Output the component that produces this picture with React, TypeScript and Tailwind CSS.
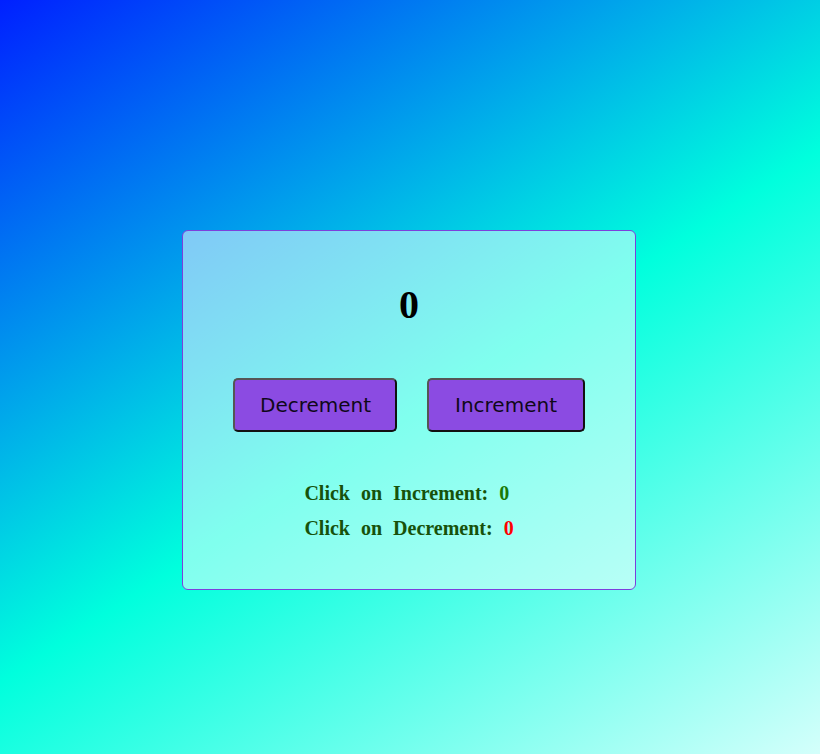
import React, { useState } from "react";

const App = () => {
  const [count, setCount] = useState(0);
  const [inc, setInc] = useState(0);
  const [dec, setDec] = useState(0);

  return (
    <div className="min-h-[754px] w-full bg-linear-[147deg] from-[#0020ff] via-[#00ffdd] via-53% to-[#d4fffb] pt-[230px] pr-[2px] flex justify-center">
      <div className="w-[454px] h-[360px] border border-[#7d3fdc] rounded-[6px] bg-white/50 flex flex-col items-center pt-[52px]">
        <h1 className="font-['Liberation_Serif',serif] font-bold text-[40px] leading-[44px] text-black">
          {count}
        </h1>
        <div className="flex gap-[30px] mt-[51px]">
          <button
            onClick={() => {
              setCount(count - 1);
              setDec(dec + 1);
            }}
            className="font-['DejaVu_Sans',sans-serif] text-[20px] leading-[23px] px-[25px] py-[13.5px] w-[164px] bg-[#8b4be2] text-[#10081a] rounded-[5px] border-2 border-t-[#555] border-l-[#555] border-b-[#111] border-r-[#111]"
          >
            Decrement
          </button>
          <button
            onClick={() => {
              setCount(count + 1);
              setInc(inc + 1);
            }}
            className="font-['DejaVu_Sans',sans-serif] text-[20px] leading-[23px] px-[25px] py-[13.5px] w-[158px] bg-[#8b4be2] text-[#10081a] rounded-[5px] border-2 border-t-[#555] border-l-[#555] border-b-[#111] border-r-[#111]"
          >
            Increment
          </button>
        </div>
        <div className="mt-[50px] flex flex-col gap-[12px] font-['Liberation_Serif',serif] font-bold text-[20px] leading-[23px] [word-spacing:6px] text-[#17520b]">
          <p>
            Click on Increment: <span className="text-[#1a7a06]">{inc}</span>
          </p>
          <p>
            Click on Decrement: <span className="text-[#ff0000]">{dec}</span>
          </p>
        </div>
      </div>
    </div>
  );
};

export default App;
